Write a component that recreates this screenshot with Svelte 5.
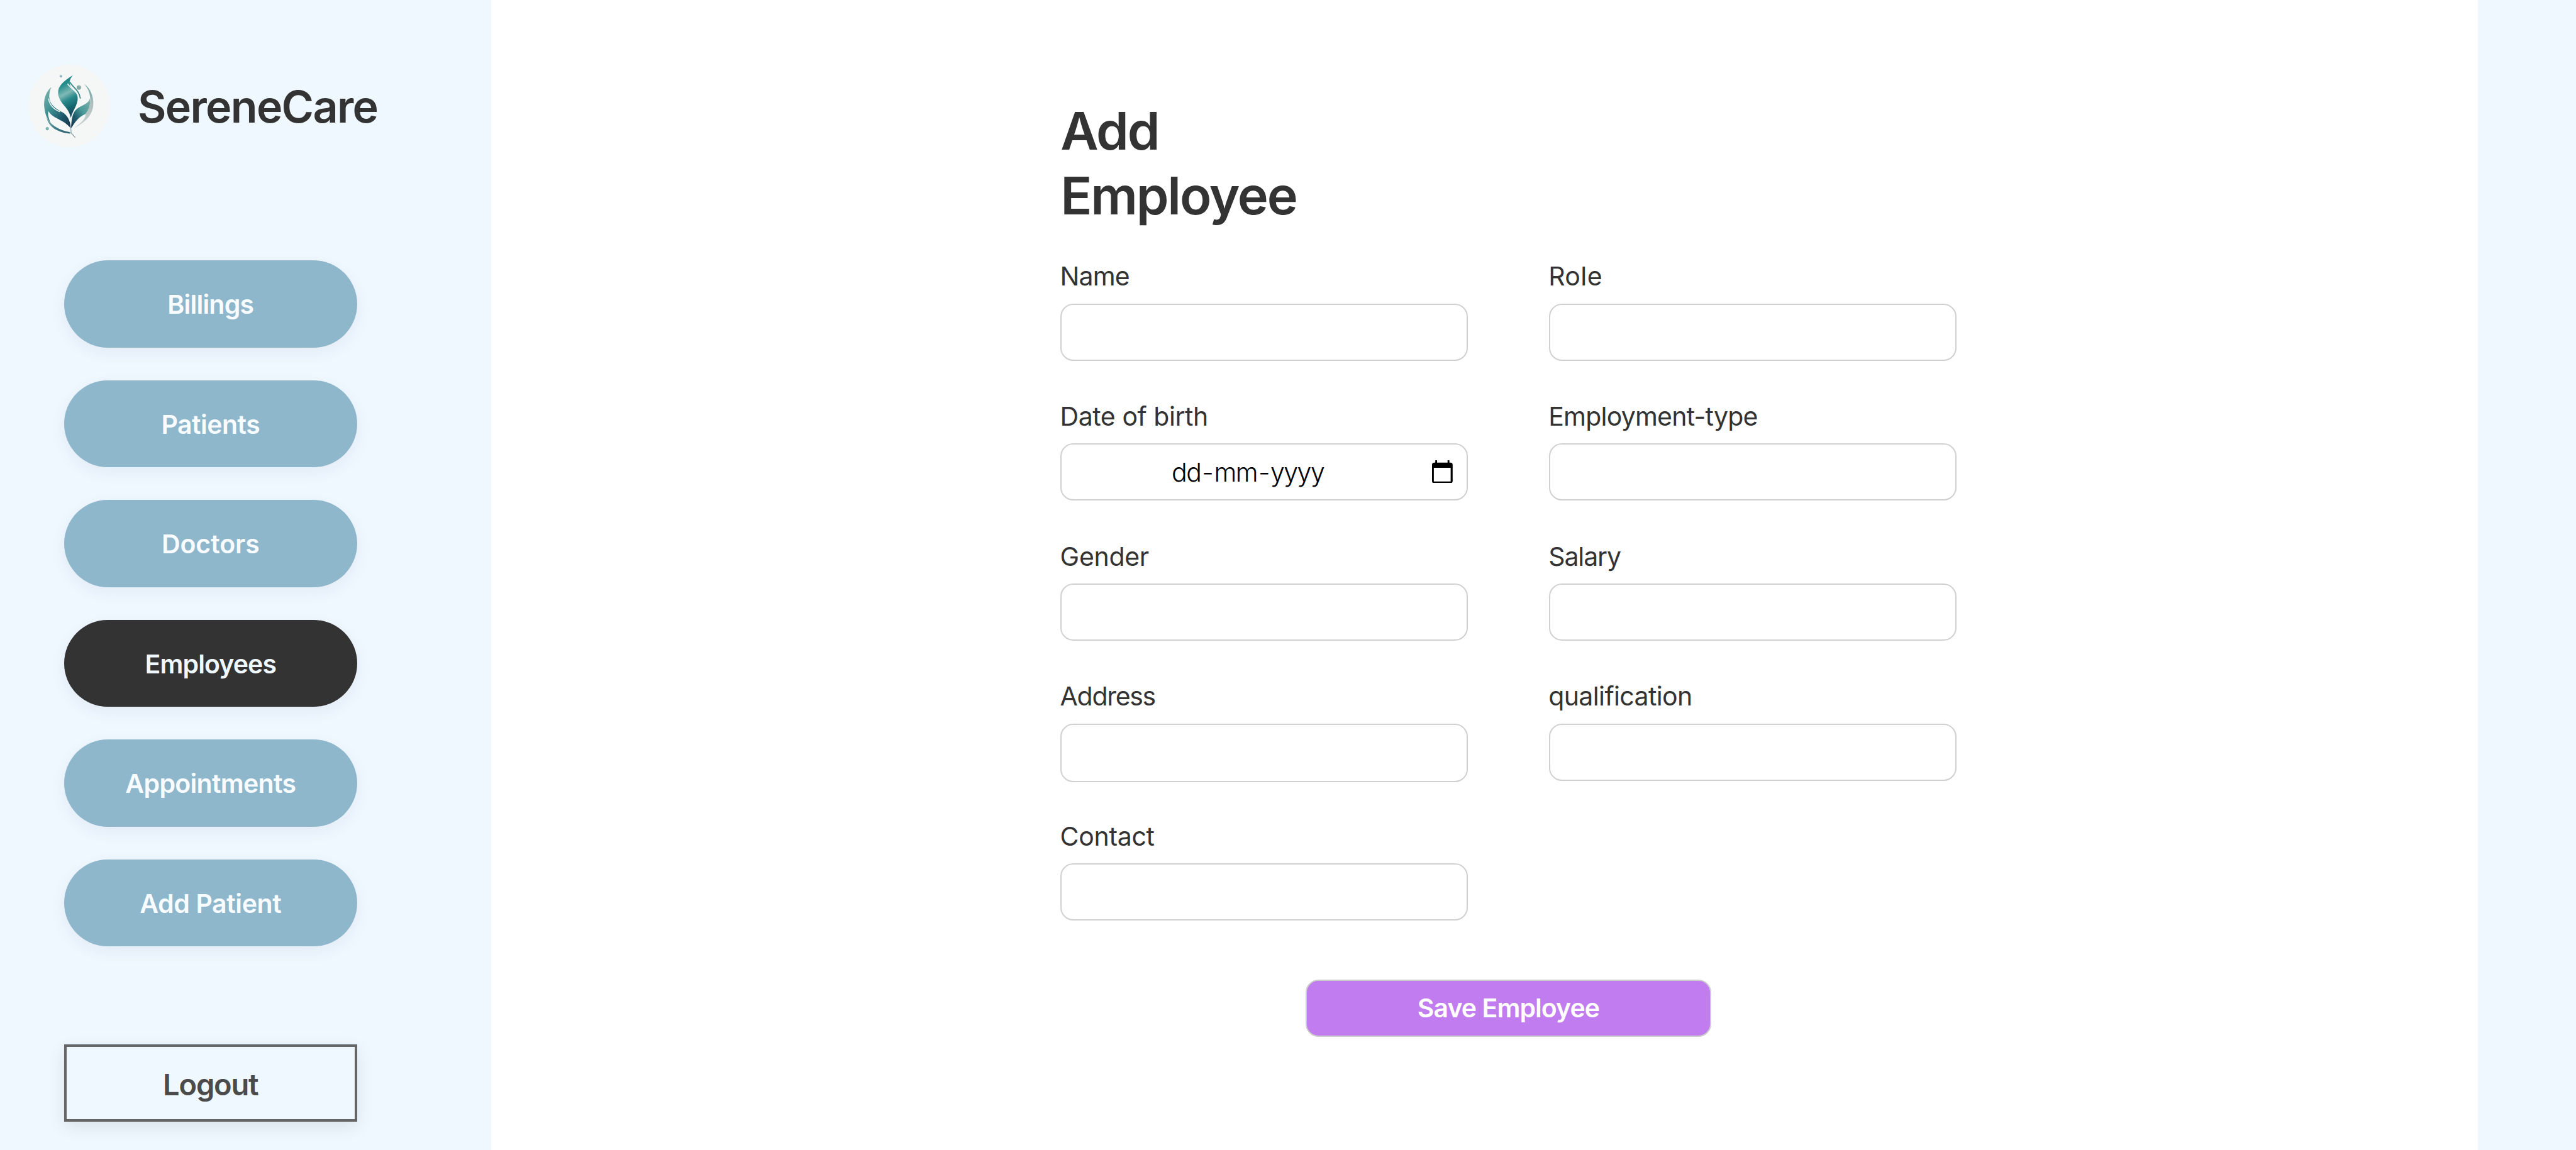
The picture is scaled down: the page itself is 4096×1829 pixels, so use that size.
<script>
  const nav = [
    { label: 'Billings', tracking: -0.78 },
    { label: 'Patients', tracking: -0.5 },
    { label: 'Doctors', tracking: -0.1 },
    { label: 'Employees', tracking: -0.89, active: true },
    { label: 'Appointments', tracking: -0.69 },
    { label: 'Add Patient', tracking: -0.39 }
  ];

  // Fields are listed column by column.
  const columns = [
    [
      { label: 'Name', tracking: -0.93 },
      { label: 'Date of birth', tracking: -0.45, date: true },
      { label: 'Gender', tracking: -0.3 },
      { label: 'Address', tracking: -1.3, tall: true },
      { label: 'Contact', tracking: -0.3 }
    ],
    [
      { label: 'Role', tracking: 0.4 },
      { label: 'Employment-type', tracking: -0.78 },
      { label: 'Salary', tracking: -1.1 },
      { label: 'qualification', tracking: -0.6 }
    ]
  ];
</script>

<div class="page">
  <aside class="sidebar">
    <header class="brand">
      <div class="logo">
        <svg viewBox="8 28 446 459" aria-hidden="true">
          <defs>
            <linearGradient id="petal" x1="0" y1="0" x2="0.25" y2="1">
              <stop offset="0" stop-color="#0f7376" />
              <stop offset="0.28" stop-color="#268d8d" />
              <stop offset="0.5" stop-color="#7fb9b6" />
              <stop offset="0.66" stop-color="#2b8a8b" />
              <stop offset="0.85" stop-color="#15686f" />
              <stop offset="1" stop-color="#1a4a60" />
            </linearGradient>
            <linearGradient id="left" x1="0.1" y1="0" x2="0.9" y2="1">
              <stop offset="0" stop-color="#7db3b0" />
              <stop offset="0.4" stop-color="#3d8f90" />
              <stop offset="0.75" stop-color="#1c5468" />
              <stop offset="1" stop-color="#17384f" />
            </linearGradient>
            <linearGradient id="right" x1="0.9" y1="0" x2="0.1" y2="1">
              <stop offset="0" stop-color="#79aeab" />
              <stop offset="0.4" stop-color="#4c9b9a" />
              <stop offset="0.7" stop-color="#1d5f6e" />
              <stop offset="1" stop-color="#17384f" />
            </linearGradient>
            <linearGradient id="edge" x1="0" y1="0" x2="0" y2="1">
              <stop offset="0" stop-color="#5ba3a1" />
              <stop offset="0.45" stop-color="#aebfbd" />
              <stop offset="1" stop-color="#c9d3d2" />
            </linearGradient>
            <linearGradient id="stem" x1="0" y1="0" x2="1" y2="1">
              <stop offset="0" stop-color="#86b5b2" />
              <stop offset="0.5" stop-color="#3e7f88" />
              <stop offset="1" stop-color="#2c5d70" />
            </linearGradient>
          </defs>
          <path fill="url(#petal)" d="M252 86 C225 104 190 125 174 158 C160 192 178 228 202 254 C222 276 234 296 240 324 C246 298 258 280 268 258 C280 230 284 206 268 184 C252 166 232 150 234 122 C236 108 242 98 252 86Z" />
          <path fill="none" stroke="#f5f6f6" stroke-width="5" d="M222 134 C234 152 256 166 274 186" />
          <path fill="none" stroke="#2f8587" stroke-width="6" stroke-linecap="round" d="M236 126 C250 154 286 168 293 214" />
          <path fill="url(#left)" d="M132 152 C102 176 86 222 93 270 C97 304 108 330 128 352 C116 326 110 302 116 286 C140 330 200 330 240 382 C238 340 222 310 192 292 C156 274 122 250 120 206 C120 184 124 168 132 152Z" />
          <path fill="none" stroke="#f5f6f6" stroke-width="5" d="M116 216 C122 254 142 276 180 290" />
          <path fill="url(#right)" d="M346 216 C342 240 310 252 284 266 C258 284 244 306 242 382 C262 350 282 318 322 302 C342 286 350 250 346 216Z" />
          <path fill="url(#edge)" d="M312 134 C348 156 370 206 365 256 C360 312 314 354 256 382 C300 350 326 326 322 300 C342 278 352 242 347 206 C344 176 332 152 312 134Z" />
          <path fill="url(#stem)" d="M104 318 C124 360 170 392 236 404 L238 412 C176 408 114 378 104 318Z" />
          <path fill="none" stroke="#7f9ca3" stroke-width="4" d="M240 376 L242 408 L265 434" />
          <circle cx="285" cy="155" r="12" fill="#83a9a3" />
          <circle cx="185" cy="92" r="7" fill="#8db4c2" />
          <circle cx="109" cy="384" r="9" fill="#78b0ae" />
        </svg>
      </div>
      <span class="brand-name">SereneCare</span>
    </header>

    <nav>
      {#each nav as item}
        <button class="nav-item" class:active={item.active} style:letter-spacing="{item.tracking}px">{item.label}</button>
      {/each}
    </nav>

    <button class="logout"><span>Logout</span></button>
  </aside>

  <main>
    <form>
      <h1>Add<br />Employee</h1>
      <div class="columns">
        {#each columns as fields}
          <div class="column">
            {#each fields as field}
              <div class="field">
                <span class="label" style:letter-spacing="{field.tracking}px">{field.label}</span>
                <div class="input" class:date={field.date} class:tall={field.tall}>
                  {#if field.date}
                    <span class="date-text"><span>dd</span><span class="dash">-</span><span>mm</span><span class="dash">-</span><span>yyyy</span></span>
                    <svg class="calendar" viewBox="0 0 114 127" aria-hidden="true">
                      <path fill-rule="evenodd" d="M18 0H28V13H86V0H96V13H102Q114 13 114 25V115Q114 127 102 127H12Q0 127 0 115V25Q0 13 12 13H18ZM10 42V117H103V42Z" />
                    </svg>
                  {/if}
                </div>
              </div>
            {/each}
          </div>
        {/each}
      </div>
      <button class="save" type="button">Save Employee</button>
    </form>
  </main>
</div>

<style>
  :global(body) {
    margin: 0;
    background: #eff7ff;
  }
  .page {
    display: flex;
    width: 4096px;
    height: 1829px;
    overflow: hidden;
    background: #eff7ff;
    color: #333;
    font-family: Inter, 'Liberation Sans', sans-serif;
    font-size: 41px;
  }
  button {
    box-sizing: border-box;
    margin: 0;
    padding: 0;
    border: 0;
    font: inherit;
    font-weight: 600;
  }
  .sidebar {
    box-sizing: border-box;
    flex: none;
    width: 781px;
    padding: 103px 0 0 45px;
    display: flex;
    flex-direction: column;
  }
  .brand {
    display: flex;
    align-items: center;
    gap: 44px;
    height: 131px;
  }
  .logo {
    display: flex;
    width: 130px;
    height: 131px;
    border-radius: 50%;
    background: #f5f6f6;
    overflow: hidden;
  }
  .logo svg {
    width: 100%;
    height: 100%;
  }
  .brand-name {
    padding-top: 3px;
    font-size: 70px;
    font-weight: 600;
    line-height: 84px;
    letter-spacing: -1.7px;
  }
  nav {
    display: flex;
    flex-direction: column;
    gap: 52px;
    margin: 180.3px 0 0 56.8px;
  }
  .nav-item {
    width: 466px;
    height: 138.5px;
    padding-top: 1px;
    border-radius: 70px;
    background: #8fb7cc;
    color: #f9fcff;
    box-shadow: 0 8px 26px rgba(40, 40, 90, 0.06);
  }
  .nav-item.active {
    background: #333;
    color: #eff7ff;
  }
  .logout {
    width: 466px;
    height: 123px;
    margin: 155.5px 0 0 56.8px;
    padding-top: 4px;
    border: 4px solid #666;
    background: #eff7ff;
    color: #4b4b4b;
    font-size: 47px;
    letter-spacing: -1.2px;
    box-shadow: 0 8px 26px rgba(0, 0, 0, 0.09);
  }
  main {
    flex: none;
    width: 3159px;
    background: #fff;
  }
  form {
    display: flex;
    flex-direction: column;
    width: 1424.6px;
    padding: 156.6px 0 0 905.2px;
  }
  h1 {
    margin: 0 0 50.6px;
    font-size: 83px;
    font-weight: 600;
    line-height: 103.6px;
    letter-spacing: -2.2px;
  }
  .columns {
    display: flex;
    gap: 128.6px;
  }
  .column {
    width: 648px;
    display: grid;
    grid-auto-rows: 222.6px;
    align-content: start;
  }
  .field {
    display: flex;
    flex-direction: column;
  }
  .label {
    margin: 0 0 17.9px -0.6px;
    line-height: 50.5px;
  }
  .input {
    box-sizing: border-box;
    height: 91px;
    border: 2px solid #d0d0d0;
    border-radius: 20.5px;
    background: #fff;
  }
  .input.tall {
    height: 93px;
  }
  .input.date {
    display: flex;
    align-items: center;
    padding: 0 22.4px 0 3px;
    color: #000;
    font-weight: 300;
  }
  .date-text {
    flex: 1;
    display: flex;
    justify-content: center;
    letter-spacing: -1.5px;
  }
  .dash {
    margin: 0 2px;
  }
  .calendar {
    width: 32.8px;
    height: 36.6px;
    margin-bottom: 2px;
  }
  .save {
    align-self: center;
    width: 645.5px;
    height: 91px;
    margin-top: 30.4px;
    border: 2px solid #ccc;
    border-radius: 20.5px;
    background: #c17cf0;
    color: #fff;
    letter-spacing: -0.94px;
  }
</style>
